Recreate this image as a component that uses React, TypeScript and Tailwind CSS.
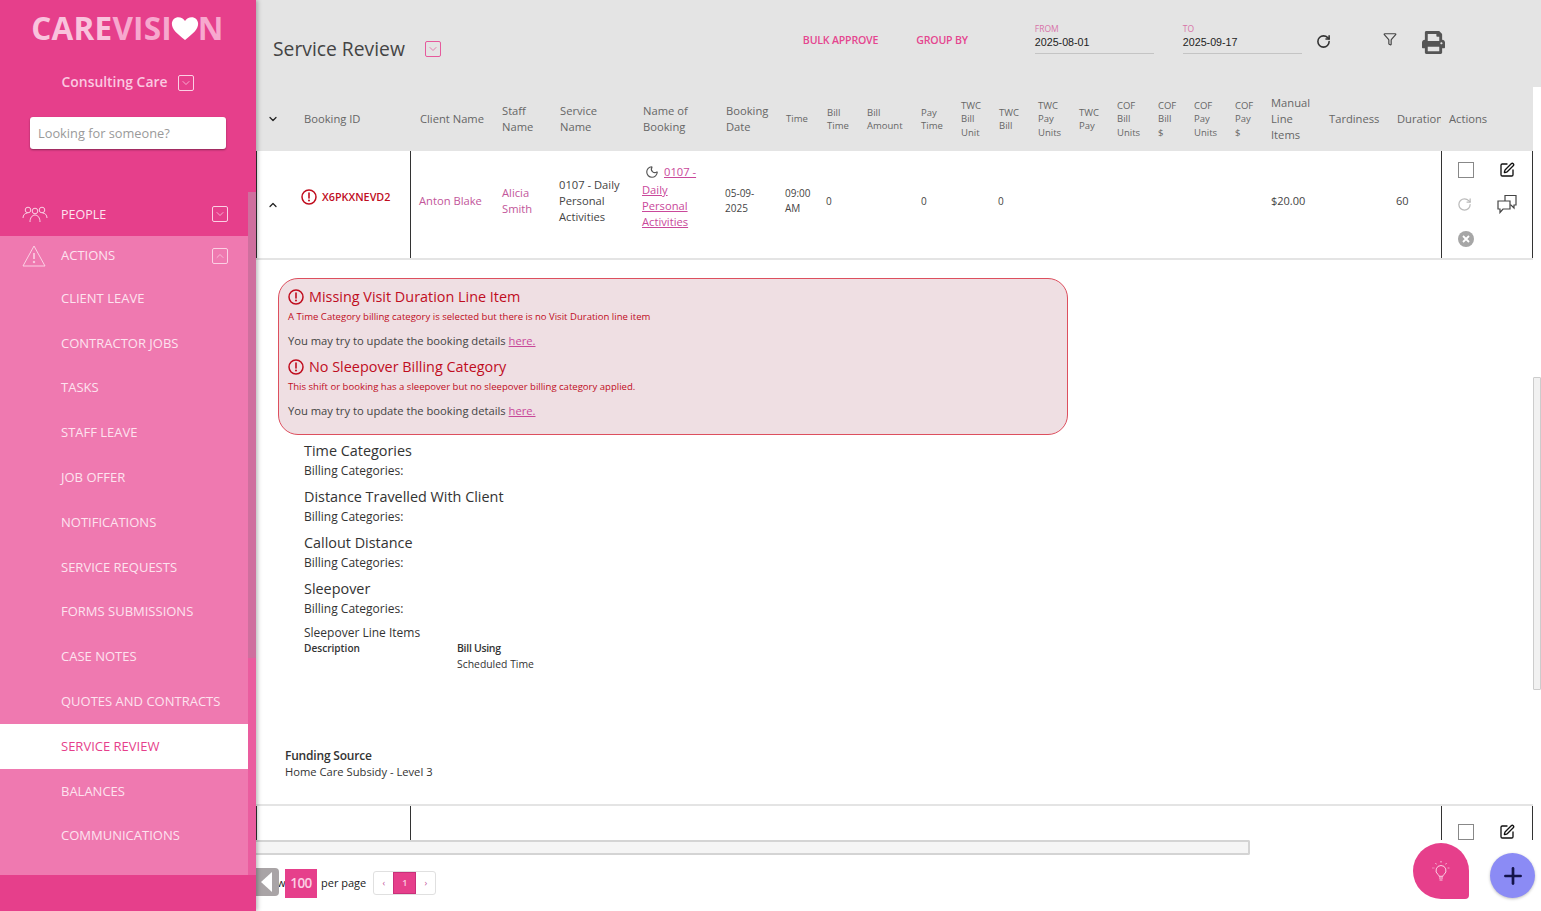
import React from "react";
import { ChevronDown, ChevronUp, Moon, SquarePen, RotateCw, Plus, Filter } from "lucide-react";
import { FaPrint } from "react-icons/fa";

const BoxChevron = ({ up = false, color = "#fbd0e4" }: { up?: boolean; color?: string }) => (
  <span className="flex h-[16px] w-[16px] items-center justify-center rounded-[2px] border" style={{ borderColor: color }}>
    {up ? <ChevronUp size={12} color={color} strokeWidth={1.5} /> : <ChevronDown size={12} color={color} strokeWidth={1.5} />}
  </span>
);

const Alert = ({ size = 16, color = "#c00d1e" }: { size?: number; color?: string }) => (
  <svg width={size} height={size} viewBox="0 0 16 16" fill="none" className="shrink-0">
    <circle cx="8" cy="8" r="7" stroke={color} strokeWidth="1.5" />
    <path d="M8 4v5" stroke={color} strokeWidth="1.6" strokeLinecap="round" />
    <circle cx="8" cy="11.5" r="1" fill={color} />
  </svg>
);

const items = ["CLIENT LEAVE", "CONTRACTOR JOBS", "TASKS", "STAFF LEAVE", "JOB OFFER", "NOTIFICATIONS", "SERVICE REQUESTS", "FORMS SUBMISSIONS", "CASE NOTES", "QUOTES AND CONTRACTS", "SERVICE REVIEW", "BALANCES", "COMMUNICATIONS"];

const headers: [string[], boolean][] = [
  [["Booking ID"], true], [["Client Name"], true], [["Staff", "Name"], true], [["Service", "Name"], true], [["Name of", "Booking"], true], [["Booking", "Date"], true],
  [["Time"], false], [["Bill", "Time"], false], [["Bill", "Amount"], false], [["Pay", "Time"], false], [["TWC", "Bill", "Unit"], false], [["TWC", "Bill"], false], [["TWC", "Pay", "Units"], false], [["TWC", "Pay"], false], [["COF", "Bill", "Units"], false], [["COF", "Bill", "$"], false], [["COF", "Pay", "Units"], false], [["COF", "Pay", "$"], false],
  [["Manual", "Line", "Items"], true], [["Tardiness"], true], [["Duration"], true], [["Actions"], true],
];

const categories = ["Time Categories", "Distance Travelled With Client", "Callout Distance", "Sleepover"];

const AlertBlock = ({ title, desc }: { title: string; desc: string }) => (
  <div>
    <div className="flex h-[20px] items-center gap-[5px] text-[14.4px] text-[#c00d1e]"><Alert /><span>{title}</span></div>
    <div className="mt-[3px] h-[14px] text-[9.55px] leading-[14px] text-[#c00d1e]">{desc}</div>
    <div className="mt-[9px] h-[16px] text-[11.2px] leading-[16px] text-[#444]">You may try to update the booking details <span className="text-[#c9489a] underline">here.</span></div>
  </div>
);

export default function App() {
  return (
    <div className="flex h-[911px] w-[1541px] overflow-hidden bg-white font-['Open_Sans',sans-serif] text-[#333]">
      <aside className="z-10 flex h-full w-[256px] shrink-0 flex-col bg-[#e63f8b] shadow-[2px_0_4px_rgba(0,0,0,0.25)]">
        <div className="flex h-[56px] items-center justify-center pr-[1px] text-[31.5px] font-bold leading-none tracking-[0.2px] text-[#f9c3dd]">
          <span>CARE</span><span className="text-[#f7a8ce]">VISI</span>
          <svg width="28" height="25" viewBox="0 0 32 28" className="-mx-[1px]"><path d="M16 27C7 20 1 15 1 8.500C1 4 4.500 1 8.500 1C11.500 1 14.500 2.500 16 5.500C17.500 2.500 20.500 1 23.500 1C27.500 1 31 4 31 8.500C31 15 25 20 16 27Z" fill="#fff" /></svg>
          <span className="text-[#f7a8ce]">N</span>
        </div>
        <div className="mt-[16px] flex h-[20px] items-center justify-center gap-[11px] text-[13.9px] font-semibold text-[#fbc8e0]">
          <span>Consulting Care</span><span className="mt-[2px]"><BoxChevron /></span>
        </div>
        <div className="mx-[30px] mt-[25px] flex h-[32px] items-center rounded-[3px] bg-white px-[8px] pt-[1px] text-[12.8px] text-[#9a9a9a] shadow-[0_1px_2px_rgba(0,0,0,0.4)]">Looking for someone?</div>
        <div className="mt-[43px] flex min-h-0 flex-1">
          <nav className="flex w-[248px] flex-col">
            <div className="flex h-[44px] items-center pl-[22px] pr-[20px] text-[12.5px] text-[#fde3ef]">
              <svg width="26" height="17" viewBox="0 0 26 17" fill="none" stroke="#fbd0e4" strokeWidth="1" className="mr-[13px]">
                <circle cx="6" cy="4" r="2.800" /><circle cx="13" cy="5" r="2.800" /><circle cx="20" cy="4" r="2.800" />
                <path d="M1 12c0-3 2-5 4.500-5M8 16c0-4 2-7 5-7s5 3 5 7M25 12c0-3-2-5-4.500-5" />
              </svg>
              <span className="flex-1 pt-[2px]">PEOPLE</span><BoxChevron />
            </div>
            <div className="flex h-[639px] flex-col bg-[#ef79b0] text-[13px] text-[#fde3ef]">
              <div className="flex h-[40px] shrink-0 items-center pl-[22px] pr-[20px]">
                <svg width="24" height="22" viewBox="0 0 24 22" fill="none" stroke="#fbd0e4" strokeWidth="1" className="mr-[15px]">
                  <path d="M12 1L23 21H1Z" strokeLinejoin="round" /><path d="M12 8v6" strokeWidth="1.600" /><circle cx="12" cy="17" r="0.800" fill="#fbd0e4" />
                </svg>
                <span className="flex-1">ACTIONS</span><BoxChevron up />
              </div>
              {items.map((t) => (
                <div key={t} className={`flex h-[44.800px] shrink-0 items-center pl-[61px] pt-[0.5px] ${t === "SERVICE REVIEW" ? "bg-white text-[#e63f8b]" : ""}`}>{t}</div>
              ))}
            </div>
          </nav>
          <div className="h-[683px] w-[8px] bg-[#ea5d9f]"><div className="h-[466px] bg-[#cf6f9e]" /></div>
        </div>
      </aside>

      <main className="flex min-w-0 flex-1 flex-col">
        <header className="flex h-[87px] shrink-0 bg-[#e4e4e4]">
          <div className="ml-[17px] mt-[36px] flex h-[26px] items-center">
            <span className="text-[19.3px] leading-none text-[#444]">Service Review</span>
            <span className="ml-[20px]"><BoxChevron color="#e65a9c" /></span>
          </div>
          <div className="ml-[362px] mt-[33px] text-[10.6px] font-semibold leading-[14px] tracking-[-0.2px] text-[#e4468f]">BULK APPROVE</div>
          <div className="ml-[38px] mt-[33px] text-[10.6px] font-semibold leading-[14px] tracking-[-0.2px] text-[#e4468f]">GROUP BY</div>
          <div className="ml-[67px] mt-[24px] h-[30px] w-[119px] border-b border-[#c4c4c4]">
            <div className="text-[8.5px] leading-[9px] text-[#d873a8]">FROM</div>
            <div className="mt-[3px] font-['Liberation_Sans',sans-serif] text-[10.7px] leading-[13px] text-[#222]">2025-08-01</div>
          </div>
          <div className="ml-[29px] mt-[24px] h-[30px] w-[119px] border-b border-[#c4c4c4]">
            <div className="text-[8.5px] leading-[9px] text-[#d873a8]">TO</div>
            <div className="mt-[3px] font-['Liberation_Sans',sans-serif] text-[10.7px] leading-[13px] text-[#222]">2025-09-17</div>
          </div>
          <RotateCw size={15} color="#333" strokeWidth={2.5} className="ml-[14px] mt-[34px]" />
          <Filter size={14} color="#444" strokeWidth={2} className="ml-[52px] mt-[32px]" />
          <FaPrint size={23} color="#555" className="ml-[25px] mt-[31px]" />
        </header>

        <div className="flex min-h-0 flex-1">
          <div className="flex w-[1277px] shrink-0 flex-col">
            <div className="grid h-[64px] shrink-0 grid-cols-[48px_116px_82px_58px_83px_83px_60px_41px_40px_54px_40px_38px_39px_41px_38px_41px_36px_41px_36px_58px_68px_52px_84px] items-center bg-[#e4e4e4] text-[#666]">
              <div className="pl-[11px]"><ChevronDown size={12} color="#222" strokeWidth={2.500} /></div>
              {headers.map(([lines, big]) => (
                <div key={lines.join(" ")} className={`whitespace-nowrap ${lines[0] === "Duration" ? "max-w-[44px] overflow-hidden" : ""} ${big ? "text-[11.2px] leading-[16px]" : "text-[9.5px] leading-[13.5px]"}`}>
                  {lines.map((l) => <div key={l}>{l}</div>)}
                </div>
              ))}
            </div>

            <div className="grid h-[109px] shrink-0 grid-cols-[45px_109px_92px_57px_83px_83px_60px_41px_95px_77px_273px_125px_45px_92px] border-b-2 border-[#e4e4e4] text-[11.2px] leading-[16px] text-[#444]">
              <div className="flex items-center border-l border-[#333] pl-[10px]"><ChevronUp size={12} color="#222" strokeWidth={2.500} /></div>
              <div className="flex items-center gap-[5px] pb-[16px] text-[10.8px] font-semibold text-[#c00d1e]"><Alert />X6PKXNEVD2</div>
              <div className="flex items-center border-l border-[#333] pb-[8px] pl-[8px] text-[#c2569a]">Anton Blake</div>
              <div className="flex items-center pb-[8px] text-[#c2569a]">Alicia<br />Smith</div>
              <div className="flex items-center pb-[8px] pr-[6px]">0107 - Daily Personal Activities</div>
              <div className="pt-[13px] text-[#c9489a]">
                <div className="flex items-center"><Moon size={14} color="#555" className="ml-[3px] mr-[5px]" /><span className="underline">0107 -</span></div>
                <div className="mt-[2px] underline">Daily</div><div className="underline">Personal</div><div className="underline">Activities</div>
              </div>
              <div className="flex items-center pb-[8px] text-[10px] leading-[15px]">05-09-<br />2025</div>
              <div className="flex items-center pb-[8px] text-[10px] leading-[15px]">09:00<br />AM</div>
              <div className="flex items-center pb-[8px] text-[10px]">0</div>
              <div className="flex items-center pb-[8px] text-[10px]">0</div>
              <div className="flex items-center pb-[8px] text-[10px]">0</div>
              <div className="flex items-center pb-[8px] text-[11px]">$20.00</div>
              <div className="flex items-center pb-[8px] text-[11px]">60</div>
              <div className="grid grid-cols-2 grid-rows-3 items-center justify-items-center border-x border-[#333] pb-[2px] pl-[4px] pr-[5px] pt-[2px]">
                <span className="h-[16px] w-[16px] border border-[#888]" />
                <SquarePen size={16} color="#111" strokeWidth={2} />
                <RotateCw size={15} color="#bbb" strokeWidth={2} className="-ml-[3px]" />
                <svg width="20" height="20" viewBox="0 0 20 20" fill="none" stroke="#444" strokeWidth="1.200"><path d="M8 7V1.500h11V11h-2v3l-3-3h-1" /><path d="M1 7h12v8H6l-3 3.500V15H1Z" /></svg>
                <svg width="16" height="16" viewBox="0 0 16 16"><circle cx="8" cy="8" r="8" fill="#a6a6a6" /><path d="M5 5l6 6M11 5l-6 6" stroke="#fff" strokeWidth="1.800" /></svg>
              </div>
            </div>

            <div className="h-[546px] shrink-0 border-b-2 border-[#e4e4e4]">
              <div className="ml-[22px] mt-[18px] flex h-[157px] w-[790px] flex-col gap-[8px] rounded-[20px] border border-[#dd4f5e] bg-[#efdfe3] px-[9px] pt-[8px]">
                <AlertBlock title="Missing Visit Duration Line Item" desc="A Time Category billing category is selected but there is no Visit Duration line item" />
                <AlertBlock title="No Sleepover Billing Category" desc="This shift or booking has a sleepover but no sleepover billing category applied." />
              </div>
              <div className="ml-[48px] mt-[5px] flex flex-col text-[#333]">
                {categories.map((c) => (
                  <div key={c} className="h-[46px]">
                    <div className="h-[21px] text-[14.4px] leading-[21px]">{c}</div>
                    <div className="h-[18px] text-[12px] leading-[19px]">Billing Categories:</div>
                  </div>
                ))}
                <div className="h-[18px] text-[12px] leading-[18px]">Sleepover Line Items</div>
                <div className="flex">
                  <div className="w-[153px] text-[10.1px] font-semibold leading-[13px]">Description</div>
                  <div>
                    <div className="text-[10.5px] font-semibold leading-[13px] tracking-[-0.3px]">Bill Using</div>
                    <div className="text-[10.4px] leading-[18px]">Scheduled Time</div>
                  </div>
                </div>
              </div>
              <div className="ml-[29px] mt-[75px] text-[#333]">
                <div className="text-[12px] font-semibold leading-[16px] tracking-[-0.2px]">Funding Source</div>
                <div className="text-[11.2px] leading-[16px]">Home Care Subsidy - Level 3</div>
              </div>
            </div>

            <div className="grid h-[34px] shrink-0 grid-cols-[154px_1031px_92px] overflow-hidden">
              <div className="border-l border-[#333]" />
              <div className="border-l border-[#333]" />
              <div className="flex justify-between border-x border-[#333] pl-[16px] pr-[17px] pt-[18px]">
                <span className="h-[16px] w-[16px] shrink-0 border border-[#888]" />
                <SquarePen size={16} color="#111" strokeWidth={2} />
              </div>
            </div>
          </div>
          <div className="w-[8px] pt-[290px]"><div className="h-[313px] rounded-[1px] border border-[#ccc] bg-[#f1f1f1]" /></div>
        </div>

        <div className="h-[15px] w-full shrink-0 bg-white"><div className="h-full w-[994px] rounded-r-[2px] border-y-2 border-r-2 border-[#d4d4d4] bg-[#f5f5f5]" /></div>

        <div className="relative flex h-[56px] shrink-0 items-center pl-[21px] text-[11px] text-[#222]">
          <span className="w-[8px] overflow-hidden pr-[2px] text-right">w</span>
          <span className="flex h-[29px] w-[32px] items-center justify-center bg-[#e63f8b] text-[13.500px] font-semibold tracking-[-0.5px] text-[#fbd0e4]">100</span>
          <span className="ml-[4px]">per page</span>
          <div className="ml-[7px] flex h-[24px] w-[63px] rounded-[3px] border border-[#e0e0e0] text-[9px]">
            <span className="flex w-[19px] items-center justify-center text-[#c2569a]">‹</span>
            <span className="flex w-[23px] items-center justify-center border border-[#c9307a] bg-[#e63f8b] font-semibold text-[#fbd0e4]">1</span>
            <span className="flex w-[19px] items-center justify-center text-[#c2569a]">›</span>
          </div>
          <div className="absolute left-0 top-[13px] flex h-[28px] w-[23px] items-center rounded-r-[4px] bg-[#a9a4a6] pl-[5px]">
            <span className="h-0 w-0 border-y-[10px] border-r-[11px] border-y-transparent border-r-white" />
          </div>
          <div className="absolute left-[1157px] top-[-12px] flex h-[56px] w-[56px] items-center justify-center rounded-[28px] rounded-br-[4px] bg-[#e63f8b]">
            <svg width="20" height="22" viewBox="0 0 20 22" fill="none" stroke="#fbd0e4" strokeWidth="1">
              <path d="M10 5.500a5 5 0 0 0-3 9c.6.500 1 1 1 1.800h4c0-.8.400-1.300 1-1.800a5 5 0 0 0-3-9Z" />
              <path d="M8 18h4M8.500 20h3" />
              <path d="M10 1v2M4.500 3l1 1.600M15.500 3l-1 1.600M1.500 8h1.800M16.700 8h1.800" strokeDasharray="1 0.5" />
            </svg>
          </div>
          <div className="absolute left-[1234px] top-[-2px] flex h-[45px] w-[45px] items-center justify-center rounded-full bg-[#8b8bf5] shadow-[0_1px_3px_rgba(0,0,0,0.25)]">
            <Plus size={26} color="#14144a" strokeWidth={2.500} />
          </div>
        </div>
      </main>
    </div>
  );
}
